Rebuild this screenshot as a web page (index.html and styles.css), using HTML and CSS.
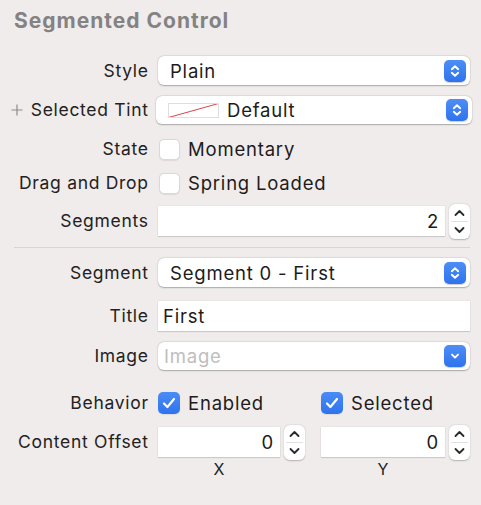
FILE: index.html
```html
<!DOCTYPE html>
<html>
<head>
<meta charset="utf-8">
<link rel="stylesheet" href="styles.css">
</head>
<body>
<div class="panel">
  <h1 class="title">Segmented Control</h1>

  <div class="row r-style">
    <div class="label">Style</div>
    <div class="popup">
      <span class="popup-text">Plain</span>
      <span class="popbtn"><svg width="22" height="22" viewBox="0 0 22 22"><path d="M7.8 9.2 L11 6.2 L14.2 9.2 M7.8 12.8 L11 15.8 L14.2 12.8" fill="none" stroke="#fff" stroke-width="1.9" stroke-linecap="round" stroke-linejoin="round"/></svg></span>
    </div>
  </div>

  <div class="row r-tint">
    <div class="label"><svg class="plus" width="12" height="12" viewBox="0 0 12 12"><path d="M6 0.5 V11.5 M0.5 6 H11.5" stroke="#8c8a8a" stroke-width="1.2"/></svg>Selected Tint</div>
    <div class="popup wide">
      <span class="swatch"><svg width="51" height="15" viewBox="0 0 51 15"><line x1="0.5" y1="14.5" x2="50.5" y2="0.5" stroke="#d9454a" stroke-width="1"/></svg></span>
      <span class="popup-text tint-text">Default</span>
      <span class="popbtn"><svg width="22" height="22" viewBox="0 0 22 22"><path d="M7.8 9.2 L11 6.2 L14.2 9.2 M7.8 12.8 L11 15.8 L14.2 12.8" fill="none" stroke="#fff" stroke-width="1.9" stroke-linecap="round" stroke-linejoin="round"/></svg></span>
    </div>
  </div>

  <div class="row r-state">
    <div class="label">State</div>
    <div class="check-line"><span class="box"></span><span class="ctext">Momentary</span></div>
  </div>

  <div class="row r-drag">
    <div class="label">Drag and Drop</div>
    <div class="check-line"><span class="box"></span><span class="ctext">Spring Loaded</span></div>
  </div>

  <div class="row r-segments">
    <div class="label">Segments</div>
    <div class="numfield">
      <div class="field num">2</div>
      <div class="stepper"><svg width="21" height="35" viewBox="0 0 21 35"><path d="M6.5 11 L10.5 7 L14.5 11" fill="none" stroke="#2a2a2a" stroke-width="1.8" stroke-linecap="round" stroke-linejoin="round"/><line x1="2" y1="17.5" x2="19" y2="17.5" stroke="#e4e1e1" stroke-width="1"/><path d="M6.5 24 L10.5 28 L14.5 24" fill="none" stroke="#2a2a2a" stroke-width="1.8" stroke-linecap="round" stroke-linejoin="round"/></svg></div>
    </div>
  </div>

  <div class="sep"></div>

  <div class="row r-segment">
    <div class="label">Segment</div>
    <div class="popup">
      <span class="popup-text">Segment 0 - First</span>
      <span class="popbtn"><svg width="22" height="22" viewBox="0 0 22 22"><path d="M7.8 9.2 L11 6.2 L14.2 9.2 M7.8 12.8 L11 15.8 L14.2 12.8" fill="none" stroke="#fff" stroke-width="1.9" stroke-linecap="round" stroke-linejoin="round"/></svg></span>
    </div>
  </div>

  <div class="row r-title">
    <div class="label">Title</div>
    <div class="field text">First</div>
  </div>

  <div class="row r-image">
    <div class="label">Image</div>
    <div class="popup">
      <span class="popup-text placeholder">Image</span>
      <span class="popbtn"><svg width="22" height="22" viewBox="0 0 22 22"><path d="M8 9.6 L11 12.6 L14 9.6" fill="none" stroke="#fff" stroke-width="1.9" stroke-linecap="round" stroke-linejoin="round"/></svg></span>
    </div>
  </div>

  <div class="row r-behavior">
    <div class="label">Behavior</div>
    <div class="pair">
      <div class="check-line"><span class="box on"><svg width="22" height="22" viewBox="0 0 22 22"><path d="M6 11.5 L9.4 15 L16 7" fill="none" stroke="#fff" stroke-width="2.2" stroke-linecap="round" stroke-linejoin="round"/></svg></span><span class="ctext">Enabled</span></div>
      <div class="check-line"><span class="box on"><svg width="22" height="22" viewBox="0 0 22 22"><path d="M6 11.5 L9.4 15 L16 7" fill="none" stroke="#fff" stroke-width="2.2" stroke-linecap="round" stroke-linejoin="round"/></svg></span><span class="ctext">Selected</span></div>
    </div>
  </div>

  <div class="row r-offset">
    <div class="label">Content Offset</div>
    <div class="pair">
      <div class="numfield">
        <div class="field num">0</div>
        <div class="stepper"><svg width="21" height="35" viewBox="0 0 21 35"><path d="M6.5 11 L10.5 7 L14.5 11" fill="none" stroke="#2a2a2a" stroke-width="1.8" stroke-linecap="round" stroke-linejoin="round"/><line x1="2" y1="17.5" x2="19" y2="17.5" stroke="#e4e1e1" stroke-width="1"/><path d="M6.5 24 L10.5 28 L14.5 24" fill="none" stroke="#2a2a2a" stroke-width="1.8" stroke-linecap="round" stroke-linejoin="round"/></svg></div>
      </div>
      <div class="numfield">
        <div class="field num">0</div>
        <div class="stepper"><svg width="21" height="35" viewBox="0 0 21 35"><path d="M6.5 11 L10.5 7 L14.5 11" fill="none" stroke="#2a2a2a" stroke-width="1.8" stroke-linecap="round" stroke-linejoin="round"/><line x1="2" y1="17.5" x2="19" y2="17.5" stroke="#e4e1e1" stroke-width="1"/><path d="M6.5 24 L10.5 28 L14.5 24" fill="none" stroke="#2a2a2a" stroke-width="1.8" stroke-linecap="round" stroke-linejoin="round"/></svg></div>
      </div>
    </div>
  </div>

  <div class="row r-axes">
    <div class="label"></div>
    <div class="pair">
      <div class="axis">X</div>
      <div class="axis">Y</div>
    </div>
  </div>
</div>
</body>
</html>
```

FILE: styles.css
```css
html, body {
  margin: 0;
  padding: 0;
  background: #f0ecec;
}
body {
  font-family: Inter, "Noto Sans", "Liberation Sans", sans-serif;
  color: #262424;
  width: 481px;
  height: 505px;
  overflow: hidden;
}
.panel {
  padding: 0 11px 0 0;
}
.title {
  margin: 0;
  padding: 8px 0 0 14px;
  height: 25px;
  font-size: 21px;
  font-weight: 700;
  color: #858282;
  line-height: 25px;
  letter-spacing: 1px;
}
.row {
  display: grid;
  grid-template-columns: 148px 1fr;
  column-gap: 10px;
  align-items: center;
}
.label {
  text-align: right;
  font-size: 17.5px;
  line-height: 20px;
  letter-spacing: 0.7px;
  margin-right: -0.7px;
  color: #232121;
  white-space: nowrap;
  display: flex;
  justify-content: flex-end;
  align-items: center;
}
.plus {
  margin-right: 8px;
}
.r-style { margin-top: 23px; height: 29px; }
.r-tint { margin-top: 11px; height: 28px; }
.r-state { margin-top: 14px; height: 21px; }
.r-drag { margin-top: 13px; height: 21px; }
.r-segments { margin-top: 13px; height: 30px; }
.sep {
  margin: 11px 0 0 14px;
  height: 1px;
  background: #d8d4d4;
}
.r-segment { margin-top: 10px; height: 29px; }
.r-title { margin-top: 14px; height: 30px; }
.r-image { margin-top: 11px; height: 28px; }
.r-behavior { margin-top: 22px; height: 22px; }
.r-offset { margin-top: 13px; height: 30px; }
.r-axes { margin-top: 5px; height: 14px; }

.popup {
  height: 100%;
  background: #fff;
  border-radius: 6px;
  box-shadow: 0 0.5px 1.5px rgba(0,0,0,0.28), 0 0 0 0.5px rgba(0,0,0,0.05);
  display: flex;
  align-items: center;
  padding: 0 4px 0 12px;
  box-sizing: border-box;
}
.popup.wide {
  margin: 0 -2px;
  padding-left: 12px;
}
.popup-text {
  flex: 1;
  font-size: 18.5px;
  letter-spacing: 0.8px;
  color: #1d1b1b;
  white-space: nowrap;
}
.placeholder { color: #c0bdbd; margin-left: -6px; }
.tint-text { margin-left: 8px; }
.swatch {
  display: block;
  width: 51px;
  height: 15px;
  box-sizing: border-box;
  border: 1px solid #e0dddd;
  overflow: hidden;
}
.swatch svg { display: block; margin: -1px; }
.popbtn {
  width: 22px;
  height: 22px;
  border-radius: 5px;
  background: linear-gradient(#4d8ef6, #2f73ed);
  box-shadow: 0 0.5px 1px rgba(0,0,0,0.2);
}
.popbtn svg { display: block; }

.check-line {
  display: flex;
  align-items: center;
  gap: 8px;
}
.box {
  width: 21px;
  height: 21px;
  box-sizing: border-box;
  background: #fff;
  border-radius: 5px;
  border: 1px solid #dcd8d8;
  box-shadow: 0 0.5px 1px rgba(0,0,0,0.08);
  margin-left: 1px;
}
.box.on {
  width: 22px;
  height: 22px;
  margin-left: 0;
  border: none;
  background: linear-gradient(#4a8cf6, #2f73ed);
}
.box.on svg { display: block; }
.ctext {
  font-size: 18.5px;
  letter-spacing: 0.8px;
  color: #1d1b1b;
  white-space: nowrap;
}

.numfield {
  display: flex;
  align-items: center;
  gap: 4px;
  height: 30px;
}
.field {
  background: #fff;
  height: 30px;
  box-sizing: border-box;
  box-shadow: 0 1px 1px rgba(0,0,0,0.12), 0 0 0 0.5px rgba(0,0,0,0.06);
  font-size: 18.5px;
  letter-spacing: 0.8px;
  color: #1d1b1b;
  line-height: 30px;
}
.field.text {
  padding-left: 5px;
}
.numfield .field {
  flex: 1;
  text-align: right;
  padding-right: 6px;
}
.stepper {
  width: 21px;
  height: 35px;
  background: #fff;
  border-radius: 6px;
  box-shadow: 0 0.5px 1.5px rgba(0,0,0,0.25);
  flex: none;
}
.stepper svg { display: block; }

.pair {
  display: grid;
  grid-template-columns: 147px 149px;
  column-gap: 16px;
  align-items: center;
}
.axis {
  font-size: 16px;
  line-height: 14px;
  color: #232121;
  padding-right: 25px;
  text-align: center;
}
```
